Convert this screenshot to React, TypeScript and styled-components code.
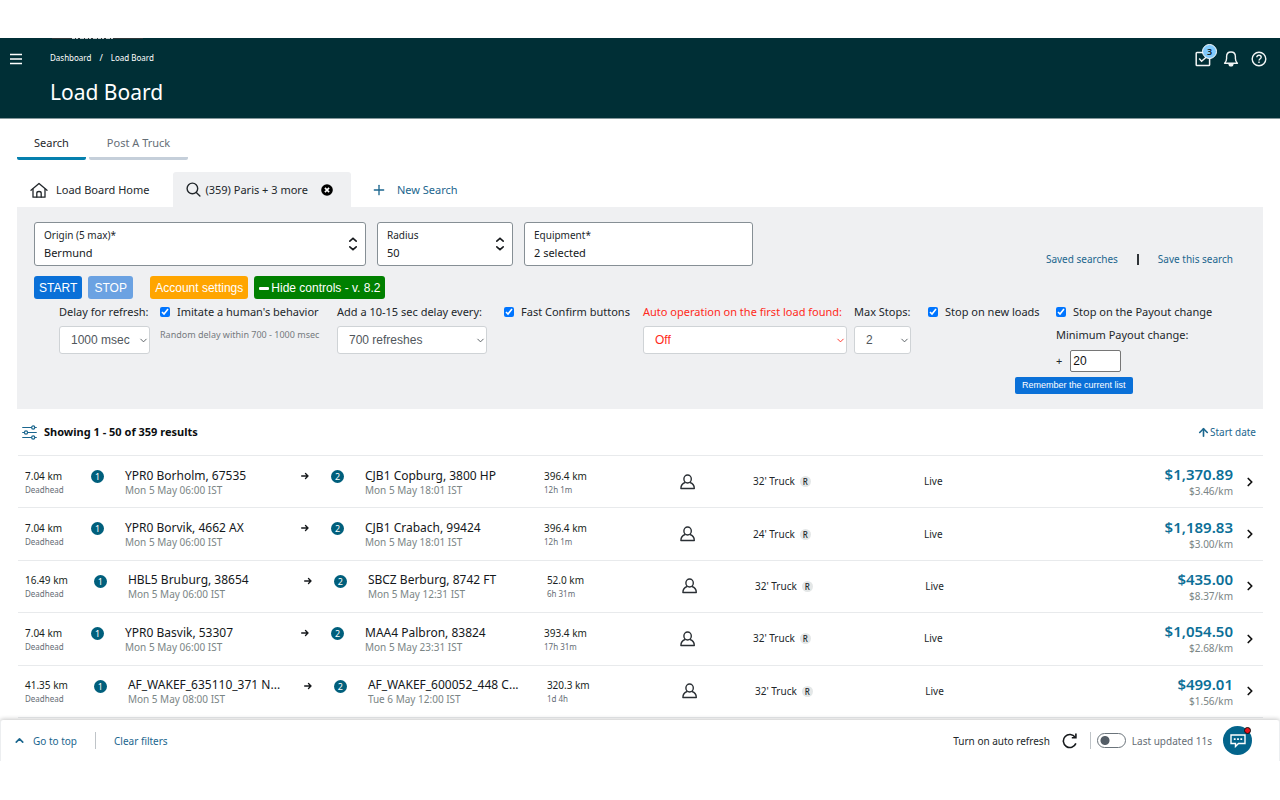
import React from "react";
import styled, { createGlobalStyle } from "styled-components";
import { ArrowUp, ChevronDown, ChevronRight, ChevronUp, Plus } from "lucide-react";

const sans = `"Noto Sans", "Open Sans", sans-serif`;
const arial = `"Liberation Sans", Arial, sans-serif`;
const link = "#1b668e";
const teal = "#005f7c";

const GlobalStyle = createGlobalStyle`
  *, *::before, *::after { box-sizing: border-box; }
  body { margin: 0; background: #fff; color: #22272b; font: 11px/16px ${sans}; }
  button, input, select { font: inherit; color: inherit; margin: 0; }
  button { border: 0; padding: 0; background: none; cursor: pointer; }
  a { text-decoration: none; color: ${link}; }
  svg { display: block; flex: none; }
  h1, h2 { margin: 0; }
`;

const Page = styled.div`
  min-height: 100vh;
  padding: 38px 0 39px;
  display: flex;
  flex-direction: column;
`;

/* ---------- header ---------- */
const Header = styled.header`
  position: relative;
  display: flex;
  justify-content: space-between;
  height: 81px;
  padding: 12px 13px 0 10px;
  background: #002f36;
  border-bottom: 1px solid #84979b;
  color: #fff;
`;
const BrandEdge = styled.svg`
  position: absolute;
  top: 0;
  left: 52px;
`;
const HeaderStart = styled.div`
  display: flex;
  align-items: flex-start;
  gap: 28px;
`;
const MenuButton = styled.button`
  padding-top: 3px;
  color: #fff;
`;
const Crumbs = styled.nav`
  display: flex;
  gap: 8px;
  font-size: 8px;
  color: #fff;
  a { color: inherit; }
  span { font-size: 9px; }
`;
const Title = styled.h1`
  margin-top: 12px;
  font-size: 21px;
  line-height: 28px;
  font-weight: 400;
`;
const HeaderIcons = styled.div`
  display: flex;
  align-items: flex-start;
  gap: 12px;
`;
const HeaderButton = styled.button`
  position: relative;
  display: grid;
  place-items: center;
  width: 16px;
  height: 18px;
  color: #f2f5f5;
`;
const CountBadge = styled.span`
  position: absolute;
  top: -6px;
  left: 7px;
  width: 15px;
  height: 15px;
  border-radius: 50%;
  border: 1px solid #fff;
  background: #80c9fb;
  color: #10222b;
  font-size: 9px;
  font-weight: 600;
  line-height: 13px;
  text-align: center;
`;

/* ---------- tabs ---------- */
const Tabs = styled.nav`
  display: flex;
  gap: 3px;
  padding: 12px 17px 0;
`;
const Tab = styled.button<{ $active?: boolean }>`
  height: 29px;
  padding: 0 ${(p) => (p.$active ? 17 : 18)}px 3px;
  border-bottom: 3px solid ${(p) => (p.$active ? "#0580ae" : "#c5cfda")};
  border-radius: 2px;
  color: ${(p) => (p.$active ? "#1f272b" : "#656e76")};
`;
const SearchTabs = styled.nav`
  display: flex;
  padding: 12px 17px 0;
`;
const SearchTab = styled.button<{ $active?: boolean; $link?: boolean }>`
  display: flex;
  align-items: center;
  gap: ${(p) => (p.$link ? 10 : p.$active ? 4 : 8)}px;
  height: 35px;
  padding: 0 ${(p) => (p.$active ? 18 : 24)}px 0 ${(p) => (p.$link ? 20 : 13)}px;
  border-radius: 3px 3px 0 0;
  background: ${(p) => (p.$active ? "#eff0f2" : "transparent")};
  color: ${(p) => (p.$link ? link : "#22272b")};
`;
const CloseIcon = styled.svg`
  margin-left: 9px;
`;

/* ---------- search panel ---------- */
const Panel = styled.section`
  margin: 0 17px;
  padding: 15px 17px;
  background: #eff0f2;
`;
const Criteria = styled.div`
  display: flex;
  gap: 11px;
`;
const FieldBox = styled.label<{ $grow: number }>`
  display: flex;
  align-items: center;
  flex: 0 1 ${(p) => p.$grow}px;
  height: 44px;
  padding: 0 7px 0 9px;
  border: 1px solid #868f95;
  border-radius: 3px;
  background: #fff;
`;
const FieldText = styled.span`
  flex: 1;
  min-width: 0;
  display: flex;
  flex-direction: column;
  font-size: 10px;
  gap: 2px;
`;
const FieldInput = styled.input`
  width: 100%;
  height: 16px;
  padding: 0;
  border: 0;
  outline: 0;
  background: none;
  font-size: 11px;
  color: #16191c;
`;
const SavedLinks = styled.div`
  display: flex;
  align-items: flex-end;
  margin-left: auto;
  padding-right: 13px;
  font-size: 10px;
  line-height: 14px;
`;
const Divider = styled.span`
  width: 2px;
  height: 11px;
  margin: 0 19px 1px;
  background: #2f3438;
`;
const ButtonRow = styled.div`
  display: flex;
  margin-top: 10px;
  gap: 6px;
`;
const ActionButton = styled.button<{ $color: string; $spaced?: boolean }>`
  display: flex;
  align-items: center;
  justify-content: center;
  gap: 2px;
  min-width: 45px;
  height: 23px;
  padding: 1px 5px 0;
  margin-right: ${(p) => (p.$spaced ? 11 : 0)}px;
  border-radius: 3px;
  background: ${(p) => p.$color};
  color: #fff;
  font: 12px/22px ${arial};
`;
const Controls = styled.div`
  display: grid;
  grid-template-columns: 101fr 177fr 167fr 139fr 211fr 74fr 128fr 190fr;
  margin: 5px 0 0 25px;
  white-space: nowrap;
`;
const Control = styled.div<{ $danger?: boolean; $roomy?: boolean }>`
  display: flex;
  flex-direction: column;
  align-items: flex-start;
  gap: ${(p) => (p.$roomy ? 7 : 6)}px;
  color: ${(p) => (p.$danger ? "#ff2a20" : "inherit")};
`;
const CheckLabel = styled.label`
  display: flex;
  align-items: center;
  gap: 7px;
`;
const Checkbox = styled.input.attrs({ type: "checkbox", defaultChecked: true })`
  width: 10px;
  height: 10px;
  accent-color: #0075ff;
`;
const Note = styled.span`
  font-size: 9px;
  color: #757a7e;
`;
const SelectBox = styled.span<{ $width: number; $danger?: boolean }>`
  display: grid;
  align-items: center;
  width: ${(p) => p.$width}px;
  color: ${(p) => (p.$danger ? "#ff2a20" : "#50565c")};
  > * { grid-area: 1 / 1; }
  > svg { z-index: 1; justify-self: end; margin-right: 1px; pointer-events: none; }
`;
const Select = styled.select`
  appearance: none;
  width: 100%;
  height: 28px;
  padding: 0 11px;
  border: 1px solid #cfd3d6;
  border-radius: 3px;
  background: #fff;
  outline: 0;
  font: 12px ${arial};
`;
const Amount = styled.label`
  display: flex;
  align-items: center;
  gap: 8px;
`;
const AmountInput = styled.input`
  width: 51px;
  height: 22px;
  padding: 0 2px;
  border: 1px solid #767676;
  border-radius: 2px;
  background: #fff;
  color: #111;
  font: 12px ${arial};
`;
const Remember = styled.div`
  grid-column: 7 / -1;
  margin: 5px 0 0 87px;
`;
const SmallButton = styled.button`
  display: block;
  height: 17px;
  padding: 0 7px;
  border-radius: 2px;
  background: #0a70d8;
  color: #fff;
  font: 9px/17px ${arial};
`;

/* ---------- results ---------- */
const ResultsBar = styled.div`
  display: flex;
  align-items: center;
  justify-content: space-between;
  height: 46px;
  padding: 0 24px 0 22px;
`;
const ResultsTitle = styled.h2`
  display: flex;
  align-items: center;
  gap: 7px;
  font-size: 11px;
  color: #0b0e10;
`;
const SortButton = styled.button`
  display: flex;
  align-items: center;
  font-size: 10px;
  color: ${link};
`;
const Loads = styled.table`
  flex: 1;
  display: flex;
  margin: 0 17px 2px 18px;
`;
const LoadsBody = styled.tbody`
  flex: 1;
  display: grid;
  grid-auto-rows: 1fr;
  border-bottom: 1px solid #e8eaec;
`;
const LoadRow = styled.tr`
  display: grid;
  grid-template-columns: minmax(40px, auto) 60px 176px 30px 34px 179px 136fr 73fr 171fr 210fr 99fr 30px;
  align-items: center;
  min-height: 52px;
  padding-left: 7px;
  border-top: 1px solid #e8eaec;
  font-size: 10px;
`;
const Cell = styled.td<{ $tight?: boolean; $end?: boolean }>`
  padding: 0;
  white-space: nowrap;
  line-height: ${(p) => (p.$tight ? 13 : 15)}px;
  text-align: ${(p) => (p.$end ? "right" : "left")};
`;
const TextCell = styled(Cell)`
  padding-top: 2px;
`;
const StopCell = styled(Cell)<{ $indent?: boolean }>`
  align-self: start;
  padding: 14px 0 0 ${(p) => (p.$indent ? 26 : 0)}px;
`;
const ArrowCell = styled(Cell)`
  align-self: start;
  padding-top: 16px;
`;
const StopNumber = styled.span`
  display: block;
  width: 13px;
  height: 13px;
  border-radius: 50%;
  background: ${teal};
  color: #fff;
  font-size: 9px;
  line-height: 13px;
  text-align: center;
`;
const Strong = styled.div`
  color: #1a1f23;
`;
const Place = styled.div`
  font-size: 12px;
  color: #14181b;
`;
const Sub = styled.div<{ $small?: boolean }>`
  font-size: ${(p) => (p.$small ? 8 : 10)}px;
  color: ${(p) => (p.$small ? "#656d75" : "#7a8585")};
`;
const Truck = styled.div`
  display: flex;
  align-items: center;
  gap: 5px;
`;
const TypeTag = styled.span`
  width: 11px;
  height: 11px;
  border-radius: 50%;
  background: #e4e7e7;
  font-size: 8px;
  font-weight: 500;
  line-height: 11px;
  text-align: center;
`;
const Price = styled.div`
  font-size: 15px;
  line-height: 20px;
  font-weight: 600;
  color: #0c6f97;
`;
const RowButton = styled.button`
  display: block;
  margin-left: 10px;
  color: #111;
`;

/* ---------- footer ---------- */
const Footer = styled.footer`
  position: relative;
  display: flex;
  align-items: center;
  justify-content: space-between;
  height: 41px;
  padding: 0 27px 0 12px;
  border: 1px solid #eceef0;
  border-width: 0 1px;
  border-radius: 3px 3px 0 0;
  background: #fff;
  box-shadow: 0 -1px 4px rgba(0, 0, 0, 0.22);
  clip-path: inset(-8px 0 0 0);
  font-size: 10px;
`;
const FooterGroup = styled.div`
  display: flex;
  align-items: center;
`;
const FooterLink = styled.a`
  display: flex;
  align-items: center;
  gap: 7px;
`;
const Rule = styled.span<{ $wide?: boolean }>`
  width: 1px;
  height: 17px;
  margin: 0 ${(p) => (p.$wide ? 18 : 6)}px 0 ${(p) => (p.$wide ? 18 : 12)}px;
  background: #bfc4c8;
`;
const RefreshButton = styled.button`
  margin-left: 12px;
  color: #16191c;
`;
const Switch = styled.input.attrs({ type: "checkbox", role: "switch" })`
  appearance: none;
  width: 29px;
  height: 15px;
  border: 1px solid #6b747b;
  border-radius: 8px;
  background: radial-gradient(circle at 7px 50%, #545d66 4px, transparent 5px) #fff;
`;
const Updated = styled.label`
  display: flex;
  align-items: center;
  gap: 6px;
  color: #656d75;
`;
const ChatButton = styled.button`
  position: relative;
  display: grid;
  place-items: center;
  width: 29px;
  height: 29px;
  margin-left: 11px;
  border-radius: 50%;
  background: #03648b;
  color: #fff;
`;
const Dot = styled.span`
  position: absolute;
  top: 1px;
  right: 1px;
  width: 7px;
  height: 7px;
  border: 1px solid #111;
  border-radius: 50%;
  background: #e8131b;
`;

/* ---------- drawings ---------- */
const TasksIcon = () => (
  <svg width="16" height="16" viewBox="0 0 16 16" fill="none" stroke="currentColor" strokeWidth="1.5">
    <rect x="1.2" y="1.4" width="13.4" height="13.2" rx="0.8" />
    <path d="M4.2 7.6 6.6 10.2 11.4 6" />
  </svg>
);
const BellIcon = () => (
  <svg width="16" height="16" viewBox="0 0 16 16" fill="none" stroke="currentColor" strokeWidth="1.4" strokeLinejoin="round">
    <path d="M1.6 12.2C3 10.8 3.6 9.8 3.6 7.4V5.6C3.6 2.8 5.4 1 8 1s4.4 1.8 4.4 4.6v1.8c0 2.4.6 3.4 2 4.8Z" />
    <path d="M6 12.6C6.2 14.2 7 14.9 8 14.9s1.8-.7 2-2.3" fill="currentColor" />
  </svg>
);
const HelpIcon = () => (
  <svg width="16" height="16" viewBox="0 0 16 16" fill="none" stroke="currentColor" strokeWidth="1.4">
    <circle cx="8" cy="8" r="6.8" />
    <path d="M5.8 6.3C5.8 4.9 6.7 4.2 8 4.2s2.200.8 2.200 2C10.200 7.700 8 7.800 8 9.500" />
    <path d="M8 10.600v1.500" />
  </svg>
);
const HomeIcon = () => (
  <svg width="18" height="18" viewBox="0 0 18 18" fill="none" stroke="#22272b" strokeWidth="1.3" strokeLinejoin="round" strokeLinecap="round">
    <path d="M1 9.3 9 2.4l8 6.9" />
    <path d="M3 8.2v8h12v-8" />
    <path d="M6.8 16v-3.8c0-1.1.9-1.7 2.2-1.7s2.2.6 2.2 1.7V16" />
  </svg>
);
const LensIcon = () => (
  <svg width="15" height="15" viewBox="0 0 15 15" fill="none" stroke="#22272b" strokeWidth="1.4" strokeLinecap="round">
    <circle cx="6.4" cy="6.4" r="5.3" />
    <path d="m10.3 10.5 3.6 3.5" />
  </svg>
);
const SpinIcon = () => (
  <svg width="10" height="14" viewBox="0 0 10 14" fill="none" stroke="#16191c" strokeWidth="1.6" strokeLinecap="round">
    <path d="M1.8 4.2 5 1.4l3.2 2.8M1.8 9.8 5 12.6l3.2-2.8" />
  </svg>
);
const SlidersIcon = () => (
  <svg width="15" height="15" viewBox="0 0 15 15" fill="none" stroke={link} strokeWidth="1.2" strokeLinecap="round">
    <path d="M.7 2.5h8.8M13 2.5h1.3M.7 7.5h1.5M5.7 7.5h8.6M.7 12.5h8.8M13 12.5h1.3" />
    <circle cx="11.2" cy="2.5" r="1.6" />
    <circle cx="4" cy="7.5" r="1.6" />
    <circle cx="11.2" cy="12.5" r="1.6" />
  </svg>
);
const RightArrow = () => (
  <svg width="8" height="8" viewBox="0 0 8 8" fill="none" stroke="#16191c" strokeWidth="1.4" strokeLinecap="round" strokeLinejoin="round">
    <path d="M.7 4h6.3M4.5 1.5 7 4 4.5 6.5" />
  </svg>
);
const PersonIcon = () => (
  <svg width="16" height="16" viewBox="0 0 16 16" fill="none" stroke="#2a2f34" strokeWidth="1.4" strokeLinejoin="round">
    <ellipse cx="7.6" cy="5" rx="3.7" ry="4" />
    <path d="M5.200 8.500C2.200 9.400.9 11.300.9 14.500h13.400c0-3.200-1.300-5.100-4.300-6" />
  </svg>
);
const RefreshIcon = () => (
  <svg width="16" height="16" viewBox="0 0 16 16" fill="none" stroke="currentColor" strokeWidth="1.6">
    <path d="M13.9 10.4A6.5 6.500 0 1 1 13.200 4.300" />
    <path d="M13.900.6v4.200H9.800" />
  </svg>
);
const ChatIcon = () => (
  <svg width="16" height="14" viewBox="0 0 16 14" fill="none" stroke="currentColor" strokeWidth="1.4">
    <path d="M1 1h14v8.500H8.500L5.500 12.500v-3H1Z" />
    <path d="M3.800 5.200h1.800M7.100 5.200h1.800M10.400 5.200h1.800" strokeWidth="1.8" />
  </svg>
);

/* ---------- data ---------- */
const loads = [
  { dead: "7.04 km", from: "YPR0 Borholm, 67535", start: "Mon 5 May 06:00 IST", to: "CJB1 Copburg, 3800 HP", end: "Mon 5 May 18:01 IST", dist: "396.4 km", time: "12h 1m", truck: "32' Truck", price: "$1,370.89", rate: "$3.46/km" },
  { dead: "7.04 km", from: "YPR0 Borvik, 4662 AX", start: "Mon 5 May 06:00 IST", to: "CJB1 Crabach, 99424", end: "Mon 5 May 18:01 IST", dist: "396.4 km", time: "12h 1m", truck: "24' Truck", price: "$1,189.83", rate: "$3.00/km" },
  { dead: "16.49 km", from: "HBL5 Bruburg, 38654", start: "Mon 5 May 06:00 IST", to: "SBCZ Berburg, 8742 FT", end: "Mon 5 May 12:31 IST", dist: "52.0 km", time: "6h 31m", truck: "32' Truck", price: "$435.00", rate: "$8.37/km" },
  { dead: "7.04 km", from: "YPR0 Basvik, 53307", start: "Mon 5 May 06:00 IST", to: "MAA4 Palbron, 83824", end: "Mon 5 May 23:31 IST", dist: "393.4 km", time: "17h 31m", truck: "32' Truck", price: "$1,054.50", rate: "$2.68/km" },
  { dead: "41.35 km", from: "AF_WAKEF_635110_371 N...", start: "Mon 5 May 08:00 IST", to: "AF_WAKEF_600052_448 C...", end: "Tue 6 May 12:00 IST", dist: "320.3 km", time: "1d 4h", truck: "32' Truck", price: "$499.01", rate: "$1.56/km" },
];

const Field = ({ label, value, width, spin }: { label: string; value: string; width: number; spin?: boolean }) => (
  <FieldBox $grow={width}>
    <FieldText>
      {label}
      <FieldInput defaultValue={value} />
    </FieldText>
    {spin && <SpinIcon />}
  </FieldBox>
);

const Picker = ({ id, label, value, width, danger }: { id: string; label: string; value: string; width: number; danger?: boolean }) => (
  <Control $danger={danger}>
    <label htmlFor={id}>{label}</label>
    <SelectBox $width={width} $danger={danger}>
      <Select id={id}>
        <option>{value}</option>
      </Select>
      <ChevronDown size={11} />
    </SelectBox>
  </Control>
);

const Tick = ({ label }: { label: string }) => (
  <CheckLabel>
    <Checkbox />
    {label}
  </CheckLabel>
);

export default function App() {
  return (
    <Page>
      <GlobalStyle />
      <Header>
        <BrandEdge width="91" height="1" viewBox="0 0 91 1" aria-hidden="true">
          <path d="M0 .5h91" stroke="#2d3538" />
          <path d="M20 .5h41" stroke="#c9cfd0" strokeDasharray="3 1 2 2 4 1" />
        </BrandEdge>
        <HeaderStart>
          <MenuButton aria-label="Menu">
            <svg width="12" height="12" viewBox="0 0 12 12" stroke="currentColor" strokeWidth="1.6">
              <path d="M0 1.5h12M0 6h12M0 10.5h12" />
            </svg>
          </MenuButton>
          <div>
            <Crumbs aria-label="Breadcrumb">
              <a href="#dashboard">Dashboard</a>
              <span>/</span>
              <a href="#load-board">Load Board</a>
            </Crumbs>
            <Title>Load Board</Title>
          </div>
        </HeaderStart>
        <HeaderIcons>
          <HeaderButton aria-label="Tasks">
            <TasksIcon />
            <CountBadge>3</CountBadge>
          </HeaderButton>
          <HeaderButton aria-label="Notifications"><BellIcon /></HeaderButton>
          <HeaderButton aria-label="Help"><HelpIcon /></HeaderButton>
        </HeaderIcons>
      </Header>

      <Tabs>
        <Tab $active>Search</Tab>
        <Tab>Post A Truck</Tab>
      </Tabs>
      <SearchTabs>
        <SearchTab><HomeIcon />Load Board Home</SearchTab>
        <SearchTab $active>
          <LensIcon />
          (359) Paris + 3 more
          <CloseIcon width="12" height="12" viewBox="0 0 12 12">
            <circle cx="6" cy="6" r="5.8" fill="#000" />
            <path d="m3.9 3.9 4.2 4.2m0-4.2L3.9 8.1" stroke="#fff" strokeWidth="1.6" />
          </CloseIcon>
        </SearchTab>
        <SearchTab $link><Plus size={16} />New Search</SearchTab>
      </SearchTabs>

      <Panel>
        <Criteria>
          <Field label="Origin (5 max)*" value="Bermund" width={332} spin />
          <Field label="Radius" value="50" width={136} spin />
          <Field label="Equipment*" value="2 selected" width={229} />
          <SavedLinks>
            <a href="#saved">Saved searches</a>
            <Divider />
            <a href="#save">Save this search</a>
          </SavedLinks>
        </Criteria>
        <ButtonRow>
          <ActionButton $color="#0a70d8">START</ActionButton>
          <ActionButton $color="#6ba2e2" $spaced>STOP</ActionButton>
          <ActionButton $color="#ffa500">Account settings</ActionButton>
          <ActionButton $color="#008000">
            <svg width="10" height="3" viewBox="0 0 10 3"><rect width="10" height="3" rx="1" fill="#fff" /></svg>
            Hide controls - v. 8.2
          </ActionButton>
        </ButtonRow>
        <Controls>
          <Picker id="delay" label="Delay for refresh:" value="1000 msec" width={91} />
          <Control $roomy>
            <Tick label="Imitate a human's behavior" />
            <Note>Random delay within 700 - 1000 msec</Note>
          </Control>
          <Picker id="pause" label="Add a 10-15 sec delay every:" value="700 refreshes" width={150} />
          <Control><Tick label="Fast Confirm buttons" /></Control>
          <Picker id="auto" label="Auto operation on the first load found:" value="Off" width={204} danger />
          <Picker id="stops" label="Max Stops:" value="2" width={57} />
          <Control><Tick label="Stop on new loads" /></Control>
          <Control $roomy>
            <Tick label="Stop on the Payout change" />
            <label htmlFor="payout">Minimum Payout change:</label>
            <Amount>
              +
              <AmountInput id="payout" defaultValue="20" />
            </Amount>
          </Control>
          <Remember>
            <SmallButton>Remember the current list</SmallButton>
          </Remember>
        </Controls>
      </Panel>

      <ResultsBar>
        <ResultsTitle><SlidersIcon />Showing 1 - 50 of 359 results</ResultsTitle>
        <SortButton><ArrowUp size={13} strokeWidth={3} />Start date</SortButton>
      </ResultsBar>
      <Loads>
        <LoadsBody>
          {loads.map((l) => (
            <LoadRow key={l.from}>
              <TextCell $tight><Strong>{l.dead}</Strong><Sub $small>Deadhead</Sub></TextCell>
              <StopCell $indent><StopNumber>1</StopNumber></StopCell>
              <TextCell><Place>{l.from}</Place><Sub>{l.start}</Sub></TextCell>
              <ArrowCell><RightArrow /></ArrowCell>
              <StopCell><StopNumber>2</StopNumber></StopCell>
              <TextCell><Place>{l.to}</Place><Sub>{l.end}</Sub></TextCell>
              <TextCell $tight><Strong>{l.dist}</Strong><Sub $small>{l.time}</Sub></TextCell>
              <Cell><PersonIcon /></Cell>
              <Cell><Truck>{l.truck}<TypeTag>R</TypeTag></Truck></Cell>
              <Cell>Live</Cell>
              <Cell $end><Price>{l.price}</Price><Sub>{l.rate}</Sub></Cell>
              <Cell>
                <RowButton aria-label="Open load"><ChevronRight size={14} strokeWidth={3} /></RowButton>
              </Cell>
            </LoadRow>
          ))}
        </LoadsBody>
      </Loads>

      <Footer>
        <FooterGroup>
          <FooterLink href="#top"><ChevronUp size={13} strokeWidth={3} />Go to top</FooterLink>
          <Rule $wide />
          <FooterLink href="#clear">Clear filters</FooterLink>
        </FooterGroup>
        <FooterGroup>
          <span>Turn on auto refresh</span>
          <RefreshButton aria-label="Refresh"><RefreshIcon /></RefreshButton>
          <Rule />
          <Updated>
            <Switch />
            Last updated 11s
          </Updated>
          <ChatButton aria-label="Chat">
            <ChatIcon />
            <Dot />
          </ChatButton>
        </FooterGroup>
      </Footer>
    </Page>
  );
}
